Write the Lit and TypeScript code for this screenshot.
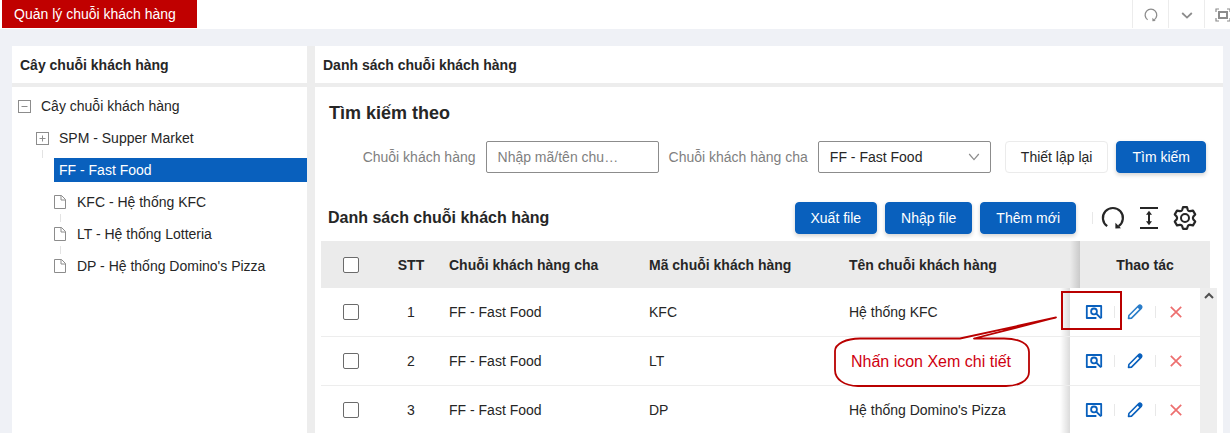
import { LitElement, html, css, svg, nothing } from "lit";
import { customElement } from "lit/decorators.js";
import { classMap } from "lit/directives/class-map.js";

const refreshIcon = (size: number) => html`
  <svg class="ico" width=${size} height=${size} viewBox="0 0 24 24" aria-hidden="true">
    <path d="M6.2 20.2A10 10 0 1 1 17.6 20.2" fill="none" stroke="currentColor" stroke-width="2.2" />
    <path d="M14.4 16.8L14.4 22.6L20 22.2Z" fill="currentColor" />
  </svg>`;

const heightIcon = html`
  <svg class="ico" width="24" height="24" viewBox="0 0 24 24" aria-hidden="true">
    <path d="M3 2H21M3 22H21" fill="none" stroke="currentColor" stroke-width="2" />
    <path d="M12 7V17" fill="none" stroke="currentColor" stroke-width="2" />
    <path d="M12 4.8L15 8.8H9ZM12 19.2L15 15.2H9Z" fill="currentColor" />
  </svg>`;

const gearIcon = html`
  <svg class="ico" width="24" height="24" viewBox="0 0 24 24" aria-hidden="true">
    <path
      d="M10 1.2H14L14.8 3.8Q15.4 5.4 17.2 5.2L20 4.6L22.2 8.4L20.4 10.4Q19.4 12 20.4 13.6L22.2 15.6L20 19.4L17.2 18.8Q15.4 18.6 14.8 20.2L14 22.8H10L9.2 20.2Q8.6 18.6 6.8 18.8L4 19.4L1.8 15.6L3.6 13.6Q4.6 12 3.6 10.4L1.8 8.4L4 4.6L6.8 5.2Q8.6 5.4 9.2 3.8Z"
      fill="none" stroke="currentColor" stroke-width="2.2" stroke-linejoin="round" />
    <circle cx="12" cy="12" r="4" fill="none" stroke="currentColor" stroke-width="2" />
  </svg>`;

const chevron = html`
  <svg class="ico" width="12" height="12" viewBox="0 0 12 12" aria-hidden="true">
    <path d="M1.2 3L6 8.6L10.8 3" fill="none" stroke="currentColor" stroke-width="1.2" />
  </svg>`;

const moreIcon = html`
  <svg class="ico" width="12" height="12" viewBox="0 0 12 12" aria-hidden="true">
    <path d="M1.2 4L6 8.6L10.8 4" fill="none" stroke="currentColor" stroke-width="1.8" />
  </svg>`;

const fullscreenIcon = html`
  <svg class="ico" width="16" height="14" viewBox="0 0 16 14" aria-hidden="true">
    <path d="M1 4V1H4M12 1H15V4M15 10V13H12M4 13H1V10" fill="none" stroke="currentColor" stroke-width="1.2" />
    <rect x="4" y="4" width="8" height="6" fill="none" stroke="currentColor" stroke-width="2" />
  </svg>`;

const viewIcon = html`
  <svg class="ico" width="18" height="16" viewBox="0 0 18 16" aria-hidden="true">
    <path d="M11.4 14H1.8V2H16.2V14.2" fill="none" stroke="currentColor" stroke-width="1.8" stroke-linejoin="round" />
    <circle cx="9" cy="7.4" r="2.9" fill="none" stroke="currentColor" stroke-width="1.8" />
    <path d="M11 9.4L16 14.4" fill="none" stroke="currentColor" stroke-width="1.9" />
  </svg>`;

const editIcon = html`
  <svg class="ico" width="16" height="16" viewBox="0 0 16 16" aria-hidden="true">
    <path d="M1.5 14.5L1.9 11.5L11.6 1.8A1.7 1.7 0 0 1 14.2 4.4L4.5 14.1Z" fill="none" stroke="currentColor"
      stroke-width="1.6" stroke-linejoin="round" />
    <path d="M10 3L11.4 1.4A2.3 2.3 0 0 1 14.6 4.6L13 6Z" fill="currentColor" />
  </svg>`;

const deleteIcon = html`
  <svg class="ico" width="12" height="12" viewBox="0 0 12 12" aria-hidden="true">
    <path d="M.8 .8L11.2 11.2M11.2 .8L.8 11.2" fill="none" stroke="currentColor" stroke-width="1.7" />
  </svg>`;

type Kind = "minus" | "plus" | "file" | "none";

interface TreeNode {
  title: string;
  kind: Kind;
  selected?: boolean;
  children?: TreeNode[];
}

const tree: TreeNode[] = [
  {
    title: "Cây chuỗi khách hàng",
    kind: "minus",
    children: [
      { title: "SPM - Supper Market", kind: "plus" },
      {
        title: "FF - Fast Food",
        kind: "none",
        selected: true,
        children: [
          { title: "KFC - Hệ thống KFC", kind: "file" },
          { title: "LT - Hệ thống Lotteria", kind: "file" },
          { title: "DP - Hệ thống Domino's Pizza", kind: "file" },
        ],
      },
    ],
  },
];

@customElement("chain-tree")
export class ChainTree extends LitElement {
  static styles = css`
    :host {
      display: block;
      font: 14px/24px "Liberation Sans", Arial, sans-serif;
      color: #262626;
    }
    ul {
      list-style: none;
      margin: 0;
      padding: 0;
    }
    ul ul {
      padding-left: 18px;
    }
    .row {
      display: flex;
      height: 32px;
      align-items: flex-start;
    }
    .switch {
      flex: none;
      width: 24px;
      display: flex;
      flex-direction: column;
      align-items: center;
    }
    .glyph {
      display: flex;
      height: 24px;
      align-items: center;
      justify-content: center;
      color: #8c8c8c;
      padding: 0;
      border: 0;
      background: none;
    }
    .line {
      width: 1px;
      height: 8px;
      background: #e3e3e3;
    }
    .title {
      flex: 1;
      padding: 0 5px;
      white-space: nowrap;
    }
    .selected {
      background: #0960bd;
      color: #fff;
    }
    svg {
      display: block;
    }
  `;

  private glyph(kind: Kind) {
    if (kind === "none") return nothing;
    if (kind === "file") {
      return html`<span class="glyph"
        ><svg width="12" height="14" viewBox="0 0 12 14" aria-hidden="true">
          <path d="M.5.5H7.5L11.5 4.5V13.5H.5ZM7 .5V5H11.5" fill="none" stroke="currentColor" /></svg
      ></span>`;
    }
    return html`<button class="glyph" aria-label=${kind === "plus" ? "Mở rộng" : "Thu gọn"}>
      <svg width="13" height="13" viewBox="0 0 13 13" aria-hidden="true">
        <rect x=".5" y=".5" width="12" height="12" fill="none" stroke="currentColor" />
        <path d="M3.5 6.5H9.5" stroke="currentColor" />
        ${kind === "plus" ? svg`<path d="M6.5 3.5V9.5" stroke="currentColor" />` : nothing}
      </svg>
    </button>`;
  }

  private branch(nodes: TreeNode[]): unknown {
    return html`<ul>
      ${nodes.map(
        (n, i) => html`<li>
          <div class="row">
            <span class="switch">
              ${this.glyph(n.kind)}
              ${i < nodes.length - 1 ? html`<span class="line"></span>` : nothing}
            </span>
            <span class=${classMap({ title: true, selected: !!n.selected })}>${n.title}</span>
          </div>
          ${n.children ? this.branch(n.children) : nothing}
        </li>`
      )}
    </ul>`;
  }

  render() {
    return this.branch(tree);
  }
}

const rows = [
  { parent: "FF - Fast Food", code: "KFC", name: "Hệ thống KFC" },
  { parent: "FF - Fast Food", code: "LT", name: "" },
  { parent: "FF - Fast Food", code: "DP", name: "Hệ thống Domino's Pizza" },
];

@customElement("chain-table")
export class ChainTable extends LitElement {
  static styles = css`
    :host {
      display: flex;
      flex-direction: column;
      flex: 1;
      min-height: 0;
      font: 14px/20px "Liberation Sans", Arial, sans-serif;
      color: #262626;
    }
    .head {
      margin-right: 7px;
    }
    .body {
      position: relative;
      display: flex;
      flex: 1;
      min-height: 0;
    }
    .scroller {
      flex: 1;
      min-width: 0;
    }
    .bar {
      flex: none;
      width: 17px;
      background: #eeeeee;
      color: #505050;
      display: flex;
      justify-content: center;
      align-items: flex-start;
      padding-top: 4px;
      box-sizing: border-box;
    }
    table {
      width: 100%;
      table-layout: fixed;
      border-collapse: separate;
      border-spacing: 0;
    }
    .narrow {
      width: 60px;
    }
    .mid {
      width: 200px;
    }
    .ops {
      width: 130px;
    }
    th,
    td {
      box-sizing: border-box;
      padding: 0 8px;
      text-align: left;
      white-space: nowrap;
    }
    th {
      height: 47px;
      background: #ebebeb;
    }
    td {
      height: 49px;
      border-bottom: 1px solid #ededed;
      background: #fff;
    }
    .center {
      text-align: center;
    }
    .edge {
      padding-right: 0;
      background-image: linear-gradient(to left, rgba(0, 0, 0, 0.14), rgba(0, 0, 0, 0));
      background-size: 10px 100%;
      background-position: right;
      background-repeat: no-repeat;
    }
    input {
      appearance: none;
      display: block;
      margin: 0 auto;
      width: 16px;
      height: 16px;
      border: 1px solid #6b6b6b;
      border-radius: 2px;
      background: #fff;
    }
    .cell {
      padding: 0;
    }
    .actions {
      display: flex;
      align-items: center;
      justify-content: center;
    }
    .actions button {
      width: 40px;
      height: 24px;
      display: flex;
      align-items: center;
      justify-content: center;
      padding: 0;
      border: 0;
      background: none;
      color: #0960bd;
    }
    .actions .hover {
      color: #2a7dc9;
    }
    .actions .danger {
      color: #ed6f6f;
    }
    .sep {
      width: 1px;
      height: 12px;
      background: #e8e8e8;
    }
    .ico {
      display: block;
    }
    .focus {
      position: absolute;
      right: 95px;
      top: 3px;
      width: 61px;
      height: 39px;
      box-sizing: border-box;
      border: 2px solid #b90000;
      pointer-events: none;
    }
    .callout {
      position: absolute;
      right: 157px;
      top: 27px;
      width: 226px;
      height: 74px;
      pointer-events: none;
    }
    .callout svg {
      display: block;
    }
    .note {
      position: absolute;
      left: 0;
      bottom: 2px;
      width: 194px;
      height: 48px;
      margin: 0;
      text-align: center;
      font-size: 16px;
      line-height: 46px;
      color: #cf0010;
      white-space: nowrap;
    }
  `;

  private cols = html`<colgroup>
    <col class="narrow" /><col class="narrow" /><col class="mid" /><col class="mid" /><col /><col class="ops" />
  </colgroup>`;

  render() {
    return html`
      <div class="head">
        <table>
          ${this.cols}
          <thead>
            <tr>
              <th><input type="checkbox" aria-label="Chọn tất cả" /></th>
              <th class="center">STT</th>
              <th>Chuỗi khách hàng cha</th>
              <th>Mã chuỗi khách hàng</th>
              <th class="edge">Tên chuỗi khách hàng</th>
              <th class="center">Thao tác</th>
            </tr>
          </thead>
        </table>
      </div>
      <div class="body">
        <div class="scroller">
          <table>
            ${this.cols}
            <tbody>
              ${rows.map(
                (r, i) => html`<tr>
                  <td><input type="checkbox" aria-label="Chọn ${r.code}" /></td>
                  <td class="center">${i + 1}</td>
                  <td>${r.parent}</td>
                  <td>${r.code}</td>
                  <td class="edge">${r.name}</td>
                  <td class="cell">
                    <div class="actions">
                      <button aria-label="Xem chi tiết">${viewIcon}</button>
                      <span class="sep"></span>
                      <button class=${classMap({ hover: i === 0 })} aria-label="Sửa">${editIcon}</button>
                      <span class="sep"></span>
                      <button class="danger" aria-label="Xóa">${deleteIcon}</button>
                    </div>
                  </td>
                </tr>`
              )}
            </tbody>
          </table>
        </div>
        <div class="bar" aria-hidden="true">
          <svg width="10" height="8" viewBox="0 0 10 8">
            <path d="M1 6L5 2L9 6" fill="none" stroke="currentColor" stroke-width="2" />
          </svg>
        </div>
        <div class="focus"></div>
        <div class="callout">
          <svg width="226" height="74" viewBox="0 0 226 74" aria-hidden="true">
            <path
              d="M126 23.5L222 2.5L140 23.5H170C186 23.5 195 29 195 37V57C195 66 184 71 172 71H24C10 71 1 64 1 55V36C1 29 12 23.5 26 23.5Z"
              fill="#fff" stroke="#b90000" stroke-width="1.8" stroke-linejoin="round" />
          </svg>
          <p class="note">Nhấn icon Xem chi tiết</p>
        </div>
      </div>
    `;
  }
}

@customElement("app-root")
export class AppRoot extends LitElement {
  static styles = css`
    :host {
      display: flex;
      flex-direction: column;
      height: 100vh;
      overflow: hidden;
      background: #eff1f6;
      font: 14px/20px "Liberation Sans", Arial, sans-serif;
      color: #262626;
    }
    .top {
      flex: none;
      display: flex;
      justify-content: space-between;
      height: 29px;
      overflow: hidden;
      background: #fff;
    }
    .tab {
      height: 28px;
      margin-left: 2px;
      padding: 0 21px 0 12px;
      background: #c00000;
      color: #fff;
      line-height: 28px;
      text-decoration: none;
      white-space: nowrap;
    }
    .tools {
      display: flex;
      height: 28px;
      margin-right: -10px;
    }
    .tools button {
      width: 36px;
      padding: 2px 0 0;
      border: 0;
      border-left: 1px solid #ececec;
      background: none;
      color: #8c8c8c;
      display: flex;
      align-items: center;
      justify-content: center;
    }
    .main {
      flex: 1;
      min-height: 0;
      display: grid;
      grid-template-columns: 295px minmax(0, 1fr);
      gap: 8px;
      margin: 17px 7px 0 12px;
      background: #ededed;
    }
    .pane {
      display: flex;
      flex-direction: column;
      gap: 4px;
      min-height: 0;
    }
    .bar {
      flex: none;
      margin: 0;
      padding: 1px 8px 0;
      background: #fff;
      font-size: 14px;
      line-height: 36px;
    }
    .fill {
      flex: 1;
      min-height: 0;
      background: #fff;
    }
    .side {
      padding-top: 7px;
    }
    .content {
      display: flex;
      flex-direction: column;
      padding: 14px 6px 0;
    }
    .search {
      padding: 0 11px 0 8px;
    }
    h2,
    h3 {
      margin: 0;
      line-height: 24px;
    }
    h2 {
      font-size: 18px;
    }
    h3 {
      flex: 1;
      font-size: 16px;
    }
    .fields {
      display: flex;
      justify-content: flex-end;
      align-items: center;
      margin-top: 16px;
    }
    label {
      margin-right: 10px;
      color: #7f7f7f;
      white-space: nowrap;
    }
    .control {
      box-sizing: border-box;
      width: 173px;
      height: 32px;
      padding: 0 11px;
      border: 1px solid #8c8c8c;
      border-radius: 2px;
      background: #fff;
      color: #262626;
      font: inherit;
      appearance: none;
    }
    .control::placeholder {
      color: #7f7f7f;
      opacity: 1;
    }
    .first {
      margin-right: 10px;
    }
    .select {
      display: grid;
      align-items: center;
      margin-right: 14px;
    }
    .select > * {
      grid-area: 1 / 1;
    }
    .select .ico {
      justify-self: end;
      margin-right: 11px;
      color: #8c8c8c;
      pointer-events: none;
    }
    .btn {
      height: 32px;
      padding: 0 15px;
      border: 1px solid #0960bd;
      border-radius: 4px;
      background: #0960bd;
      color: #fff;
      font: inherit;
      white-space: nowrap;
      box-shadow: 0 2px 4px rgba(0, 0, 0, 0.18);
    }
    .plain {
      margin-right: 8px;
      border-color: #ebebeb;
      background: #fff;
      color: #262626;
      box-shadow: none;
    }
    .toolbar {
      display: flex;
      align-items: center;
      gap: 8px;
      padding: 0 20px 0 7px;
      margin: 29px 0 7px;
    }
    .rule {
      width: 1px;
      height: 12px;
      margin-left: 8px;
      background: #e8e8e8;
    }
    .icons {
      display: flex;
      align-items: center;
      gap: 12px;
    }
    .icons button {
      padding: 0;
      border: 0;
      background: none;
      color: #262626;
    }
    .ico {
      display: block;
    }
  `;

  render() {
    return html`
      <header class="top">
        <a class="tab" href="#">Quản lý chuỗi khách hàng</a>
        <div class="tools">
          <button aria-label="Tải lại">${refreshIcon(14)}</button>
          <button aria-label="Thêm">${moreIcon}</button>
          <button aria-label="Toàn màn hình">${fullscreenIcon}</button>
        </div>
      </header>
      <main class="main">
        <section class="pane">
          <h4 class="bar">Cây chuỗi khách hàng</h4>
          <div class="fill side"><chain-tree></chain-tree></div>
        </section>
        <section class="pane">
          <h4 class="bar">Danh sách chuỗi khách hàng</h4>
          <div class="fill content">
            <form class="search">
              <h2>Tìm kiếm theo</h2>
              <div class="fields">
                <label for="chain">Chuỗi khách hàng</label>
                <input class="control first" id="chain" type="text" placeholder="Nhập mã/tên chu…" />
                <label for="parent">Chuỗi khách hàng cha</label>
                <div class="select">
                  <select class="control" id="parent">
                    <option>FF - Fast Food</option>
                  </select>
                  ${chevron}
                </div>
                <button class="btn plain" type="reset">Thiết lập lại</button>
                <button class="btn" type="button">Tìm kiếm</button>
              </div>
            </form>
            <div class="toolbar">
              <h3>Danh sách chuỗi khách hàng</h3>
              <button class="btn">Xuất file</button>
              <button class="btn">Nhập file</button>
              <button class="btn">Thêm mới</button>
              <span class="rule"></span>
              <div class="icons">
                <button aria-label="Làm mới">${refreshIcon(24)}</button>
                <button aria-label="Mật độ">${heightIcon}</button>
                <button aria-label="Cài đặt cột">${gearIcon}</button>
              </div>
            </div>
            <chain-table></chain-table>
          </div>
        </section>
      </main>
    `;
  }
}
